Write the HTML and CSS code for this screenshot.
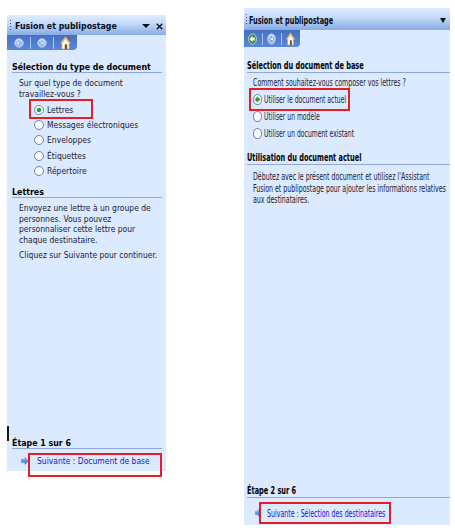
FILE: index.html
```html
<!DOCTYPE html>
<html lang="fr">
<head>
<meta charset="utf-8">
<title>Fusion et publipostage</title>
<link rel="stylesheet" href="styles.css">
</head>
<body>
<svg width="0" height="0" class="defs">
  <defs>
    <linearGradient id="disc" x2="0" y2="1"><stop stop-color="#d5e5ff"/><stop offset="1" stop-color="#a3bfef"/></linearGradient>
    <linearGradient id="arrowfill" x2="0" y2="1"><stop stop-color="#9ac5f4"/><stop offset="1" stop-color="#2465c4"/></linearGradient>
    <symbol id="left" viewBox="0 0 12 12" preserveAspectRatio="none"><circle cx="6" cy="6" r="5.2" fill="url(#disc)" stroke="#a9c5f5"/><path d="M2.8 6 6 3v2h3v2H6v2z" fill="#edf4ff" stroke="#6388d0" stroke-width=".8"/></symbol>
    <symbol id="right" viewBox="0 0 12 12" preserveAspectRatio="none"><circle cx="6" cy="6" r="5.2" fill="url(#disc)" stroke="#a9c5f5"/><path d="M9.2 6 6 3v2H3v2h3v2z" fill="#edf4ff" stroke="#6388d0" stroke-width=".8"/></symbol>
    <symbol id="left-on" viewBox="0 0 12 12" preserveAspectRatio="none"><circle cx="6" cy="6" r="5.2" fill="#328b35" stroke="#c4e2c8"/><path d="M2.3 6 6 2.6v2h3v2.8H6v2z" fill="#fff"/></symbol>
    <symbol id="home" viewBox="0 0 12 14" preserveAspectRatio="none"><path d="M8.5 1.5H10v4H8.5z" fill="#b84a2a"/><path d="M2 7v6h8V7L6 2.5z" fill="#fffbe9" stroke="#b99c62" stroke-width=".6"/><path d="M.8 7.5 6 1.5l5.2 6" fill="none" stroke="#e3c47d" stroke-width="1.3"/><path d="M5.2 8.3h2.6V13H5.2z" fill="#75502d"/></symbol>
    <symbol id="next" viewBox="0 0 8 8" preserveAspectRatio="none"><path d="M.5 2.4H4V.5L7.5 4 4 7.5V5.6H.5z" fill="url(#arrowfill)" stroke="#4c82cf" stroke-width=".5"/></symbol>
  </defs>
</svg>
<main class="stage">
  <section class="pane first">
    <header class="titlebar"><i class="grip"></i><b class="title">Fusion et publipostage</b><i class="caret"></i><svg class="close" viewBox="0 0 7 7"><path d="M.7.7l5.6 5.6M6.3.7.7 6.3" stroke="#111" stroke-width="1.3"/></svg></header>
    <nav class="tools"><svg class="ico"><use href="#left"/></svg><i class="sep"></i><svg class="ico"><use href="#right"/></svg><i class="sep"></i><svg class="house"><use href="#home"/></svg></nav>
    <h2 class="head"><span>Sélection du type de document</span></h2>
    <p class="question">Sur quel type de document<br>travaillez-vous ?</p>
    <ul class="options">
      <li class="option"><i class="radio on"></i><span class="label">Lettres</span><i class="mark"></i></li>
      <li class="option"><i class="radio"></i><span class="label">Messages électroniques</span></li>
      <li class="option"><i class="radio"></i><span class="label">Enveloppes</span></li>
      <li class="option"><i class="radio"></i><span class="label">Étiquettes</span></li>
      <li class="option"><i class="radio"></i><span class="label">Répertoire</span></li>
    </ul>
    <h2 class="head"><span>Lettres</span></h2>
    <p class="text">Envoyez une lettre à un groupe de<br>personnes. Vous pouvez<br>personnaliser cette lettre pour<br>chaque destinataire.</p>
    <p class="text more">Cliquez sur Suivante pour continuer.</p>
    <footer class="step"><i class="cursor"></i><h2 class="head"><span>Étape 1 sur 6</span></h2>
      <div class="nextrow"><svg class="arrow"><use href="#next"/></svg><a class="link">Suivante : Document de base</a><i class="mark"></i></div></footer>
  </section>
  <section class="pane second">
    <header class="titlebar"><i class="grip"></i><b class="title">Fusion et publipostage</b><i class="caret"></i></header>
    <nav class="tools"><svg class="ico"><use href="#left-on"/></svg><i class="sep"></i><svg class="ico"><use href="#right"/></svg><i class="sep"></i><svg class="house"><use href="#home"/></svg></nav>
    <h2 class="head"><span>Sélection du document de base</span></h2>
    <p class="question">Comment souhaitez-vous composer vos lettres ?</p>
    <ul class="options">
      <li class="option"><i class="radio on"></i><span class="label">Utiliser le document actuel</span><i class="mark"></i></li>
      <li class="option"><i class="radio"></i><span class="label">Utiliser un modèle</span></li>
      <li class="option"><i class="radio"></i><span class="label">Utiliser un document existant</span></li>
    </ul>
    <h2 class="head"><span>Utilisation du document actuel</span></h2>
    <p class="text">Débutez avec le présent document et utilisez l'Assistant<br>Fusion et publipostage pour ajouter les informations relatives<br>aux destinataires.</p>
    <footer class="step"><h2 class="head"><span>Étape 2 sur 6</span></h2>
      <div class="nextrow"><svg class="arrow"><use href="#next"/></svg><a class="link">Suivante : Sélection des destinataires</a><i class="mark"></i></div></footer>
  </section>
</main>
</body>
</html>
```
FILE: styles.css
```css
* { box-sizing: border-box; }
body { margin: 0; background: #fff; color: #1b2030; font-family: "DejaVu Sans Condensed", "DejaVu Sans", sans-serif; }
h2, p, ul { margin: 0; padding: 0; list-style: none; }
.defs { position: absolute; }
.stage { display: flex; align-items: flex-start; width: 455px; height: 528px; overflow: hidden; }
.pane { display: flex; flex-direction: column; flex: none; background: #dceaff; white-space: nowrap; }
.first { --body: .94; --label: .94; --bold: .975; --title: .975; width: 159px; height: 456px; margin: 15px 78px 0 7px; font-size: 9px; }
.second { --body: .697; --label: .677; --bold: .732; --title: .725; width: 206px; height: 517px; margin-top: 8px; font-size: 10px; }

/* Narrowed lettering: each pane sets its own horizontal factors */
.question, .text, .link { transform: scaleX(var(--body)); transform-origin: 0 50%; }
.label { transform: scaleX(var(--label)); transform-origin: 0 50%; }
.head span { display: block; width: max-content; transform: scaleX(var(--bold)); transform-origin: 0 50%; }
.title { transform: scaleX(var(--title)); transform-origin: 0 50%; color: #080d1b; }

.titlebar { display: flex; align-items: center; flex: none; height: 20px; padding: 2px 3px 0 3px; background: linear-gradient(#e0ecff, #c2d9fa 45%, #86aae5); }
.grip { width: 1px; height: 12px; margin-right: 4px; background: repeating-linear-gradient(#38558d 0 1px, transparent 1px 3px); }
.caret { margin-left: auto; border: 4px solid transparent; border-top: 4px solid #111; border-bottom: 0; }
.close { width: 7px; height: 7px; margin-left: 6px; }
.tools { display: flex; align-items: center; flex: none; width: 70px; height: 15px; padding-left: 7px; background: linear-gradient(#4470c4, #5b88d8); border-radius: 0 0 4px 0; }
.ico { width: 10px; height: 10px; }
.sep { width: 1px; height: 12px; margin: 0 6px; background: #a7c4f5; }
.house { width: 11px; height: 14px; }

.head { flex: none; height: 11px; margin: 0 4px 0 5px; font-size: inherit; line-height: 10px; color: #000; border-bottom: 1px solid #8fa9d6; }
.first .head { margin-top: 12px; }
.first .question { margin: 5px 0 0 12px; line-height: 10.5px; }
.option { position: relative; display: flex; align-items: center; height: 15.3px; }
.radio { width: 10px; height: 10px; margin-right: 3px; border: 1px solid #6d89ab; border-radius: 50%; background: #f8fbff; }
.on { background: radial-gradient(circle, #27a225 0 1.8px, #f8fbff 2.6px); }
.mark { position: absolute; z-index: 1; border: 2px solid #e81c24; }
.first .options { margin: 3px 0 0 27px; }
.first .options + .head { margin-top: 9px; }
.first .option .mark { left: -5px; top: -3px; width: 64px; height: 20px; }
.first .text { margin: 5px 0 0 12px; line-height: 10.5px; }
.first .more { margin-top: 5px; }
.step { position: relative; margin-top: auto; }
.nextrow { position: relative; display: flex; align-items: center; height: 22px; padding: 2px 0 0 14px; }
.arrow { width: 8px; height: 8px; margin-right: 8px; }
.link { color: #1714dc; }
.first .nextrow .mark { left: 21px; top: 4px; width: 134px; height: 24px; }
.cursor { position: absolute; left: 0; top: 0; width: 2px; height: 15px; background: #21180f; }

.second .titlebar { height: 22px; padding: 2px 4px 0 2px; }
.second .grip { margin-right: 2px; }
.second .caret { border-left-width: 3px; border-right-width: 3px; border-top-width: 5px; }
.second .tools { width: 56px; height: 17px; padding-left: 4px; }
.second .ico { width: 9px; height: 12px; }
.second .sep { margin: 0 4px 0 5px; }
.second .house { width: 9px; }
.second .head { margin: 12px 0 0 3px; height: 14px; line-height: 13px; }
.second .question { margin: 4px 0 0 9px; line-height: 12px; }
.second .options { margin: 2px 0 0 9px; }
.second .option { height: 17px; }
.second .radio { width: 9px; height: 11px; margin-right: 2px; }
.second .option .mark { left: -4px; top: -3px; width: 101px; height: 23px; }
.second .options + .head { margin-top: 9px; }
.second .text { margin: 6px 0 0 9px; line-height: 11.7px; }
.second .nextrow { height: 27px; padding: 3px 0 0 11px; }
.second .nextrow .mark { left: 15px; top: 4px; width: 132px; height: 22px; }
.second .arrow { width: 6px; margin-right: 6px; }
```
